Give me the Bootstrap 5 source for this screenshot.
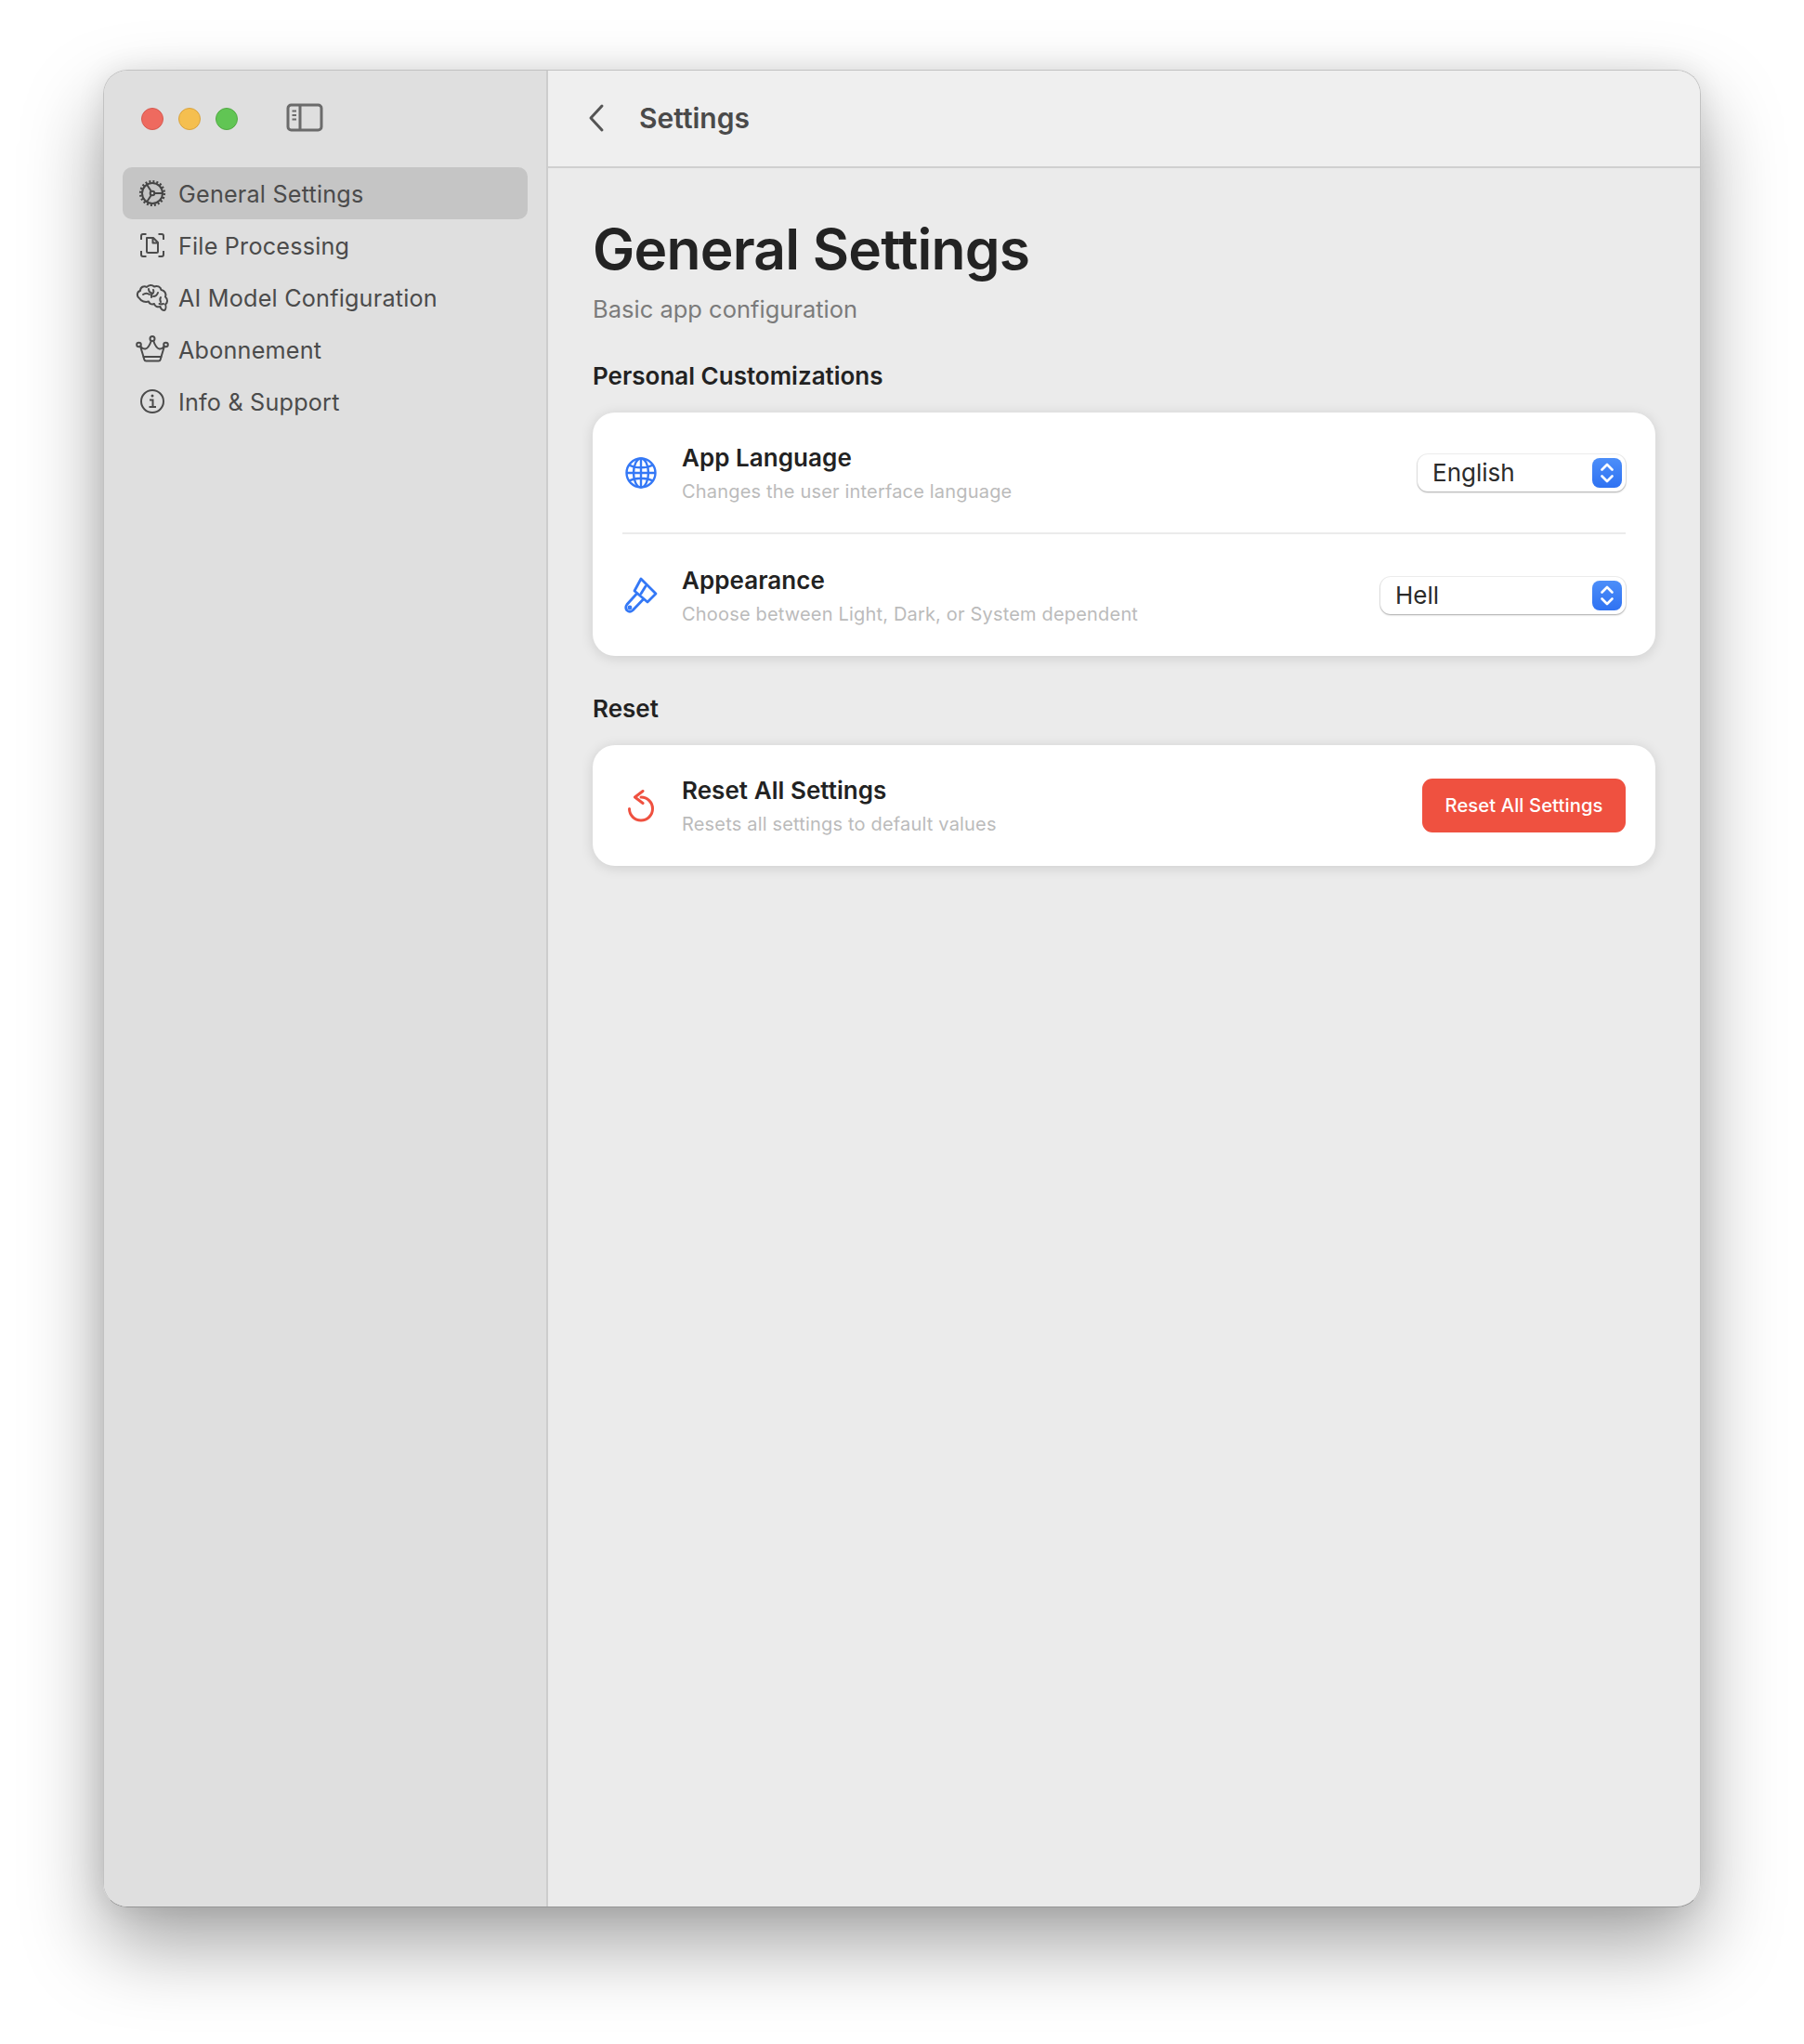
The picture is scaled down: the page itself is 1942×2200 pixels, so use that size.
<!DOCTYPE html>
<html lang="en">
<head>
<meta charset="utf-8">
<title>Settings</title>
<link href="https://cdn.jsdelivr.net/npm/bootstrap@5.3.0/dist/css/bootstrap.min.css" rel="stylesheet">
<style>
html,body{background:#fff;margin:0;}
body{font-family:Inter,"Liberation Sans",sans-serif;color:#222;padding:75px 111px 147px 111px;}
.app-win{height:1978px;background:#ebebeb;border:1px solid #c2c2c2;border-bottom-color:#969696;border-radius:26px;overflow:hidden;}
.win-shadow{border-radius:26px;box-shadow:0 0 30px rgba(0,0,0,.09),0 40px 85px rgba(0,0,0,.36);}
.side-pane{width:478px;flex:none;background:#dfdfdf;border-right:2px solid #cdcdcd;padding:0 20px;}
.title-row{height:104px;padding-left:20px;gap:16px;}
.tl-dot{width:24px;height:24px;border-radius:50%;border:1px solid;}
.tl-r{background:#ee6a5f;border-color:#d65a50;}
.tl-y{background:#f5bf4f;border-color:#d9a33f;}
.tl-g{background:#61c554;border-color:#52a944;}
.toggle-ico{margin-left:36px;margin-top:-3px;}
.side-link{height:56px;border-radius:10px;padding:0 0 0 14px;gap:10px;color:#4b4b4b;font-size:25.2px;letter-spacing:.2px;text-decoration:none;}
.side-link span{padding-top:3px;}
.side-link:hover{color:#4b4b4b;}
.side-link.is-on{background:#c5c5c5;}
.side-link svg{width:36px;height:36px;flex:none;}
.top-bar{height:105px;background:#efefef;border-bottom:2px solid #cfcfcf;padding:0 0 1px 43px;gap:35px;}
.top-title{font-size:30px;font-weight:600;color:#4a4a4a;margin:0;}
.pane-body{padding:48px 48px 0 48px;}
.big-title{font-size:60.500px;font-weight:600;line-height:78px;letter-spacing:-.8px;margin:0;color:#232323;}
.sub-title{font-size:25.500px;line-height:36px;color:#7b7b7b;margin:8px 0 0;}
.group-head{font-size:26px;font-weight:600;line-height:36px;color:#222;margin:0;}
.group-head.first{margin-top:36px;}
.group-head.second{margin-top:39px;}
.set-card{border:0;border-radius:24px;background:#fff;box-shadow:0 2px 14px rgba(0,0,0,.13);margin-top:21px;padding:0 32px;}
.set-row{border:0;background:transparent;padding:0;gap:24px;}
.set-row.r-a{height:131px;border-bottom:2px solid #ebebeb;}
.set-row.r-b{height:131px;}
.set-row.r-c{height:130px;}
.row-ico{width:40px;flex:none;}
.row-ico svg{display:block;margin:auto;}
.row-t{font-size:26px;font-weight:600;line-height:36px;color:#222;padding-top:1px;letter-spacing:.05px;}
.row-d{font-size:20px;line-height:30px;color:#bbb;letter-spacing:.18px;margin-top:3px;}
.pick{height:40px;background:#fff;border-radius:11px;box-shadow:0 0 0 1px rgba(0,0,0,.06),0 1px 2px rgba(0,0,0,.3);padding:0 4px 0 16px;font-size:26px;color:#2b2b2b;}
.pick-en{width:224px;}
.pick-de{width:264px;}
.pick-box{width:32px;height:32px;border-radius:8px;background:linear-gradient(#4c8ef9,#2f72f2);}
.btn.reset-btn{width:219px;height:58px;padding:0;background:#ef5140;border:0;border-radius:11px;color:#fff;font-size:20.200px;font-weight:500;letter-spacing:.1px;}
</style>
</head>
<body>
<div class="win-shadow">
<div class="app-win d-flex">
  <aside class="side-pane">
    <div class="title-row d-flex align-items-center">
      <span class="tl-dot tl-r"></span><span class="tl-dot tl-y"></span><span class="tl-dot tl-g"></span>
      <svg class="toggle-ico" width="40" height="31" viewBox="0 0 40 31" fill="none" stroke="#6b6b6b" stroke-width="3"><rect x="2" y="2" width="36" height="27" rx="3.5"/><path d="M15 2v27"/><path d="M6.5 8.5h4.500M6.500 13h4.500M6.500 17.500h4.500" stroke-width="2"/></svg>
    </div>
    <nav class="nav flex-column">
      <a class="side-link is-on d-flex align-items-center" href="#">
        <svg viewBox="0 0 36 36" fill="none" stroke="#454545" stroke-width="2"><circle cx="18" cy="18" r="11"/><circle cx="18" cy="18" r="12.800" stroke-width="2.600" stroke-dasharray="2 2.021"/><circle cx="18" cy="18" r="2.300"/><path d="M12 8.500l4.800 7.500M20.500 18H29.500M16.800 20L12 27.500"/></svg>
        <span>General Settings</span></a>
      <a class="side-link d-flex align-items-center" href="#">
        <svg viewBox="0 0 36 36" fill="none" stroke="#4b4b4b" stroke-width="2"><path d="M6 12V8a2 2 0 0 1 2-2h3.500M24.500 6H28a2 2 0 0 1 2 2v4M30 24v4a2 2 0 0 1-2 2h-3.500M11.500 30H8a2 2 0 0 1-2-2v-4"/><path d="M12 10h7l5 5v9.500a1.500 1.500 0 0 1-1.500 1.500h-9A1.500 1.500 0 0 1 12 24.500zM18.500 10v5.500H24" stroke-linejoin="round"/></svg>
        <span>File Processing</span></a>
      <a class="side-link d-flex align-items-center" href="#">
        <svg viewBox="0 0 36 36" fill="none" stroke="#4b4b4b" stroke-width="2" stroke-linecap="round" stroke-linejoin="round"><path d="M4 19C1 17 1 12 5 11 5 7 9 5 12 7 14 4.500 18 4.500 20 6.500 23 5 27 6.500 27.500 10 31 10.500 33.500 14 32 17.500 35 20 34.500 24 32 25.500 33 28 32.500 31 31 32 28.500 32 27 30 26.500 28 23.500 29 20.500 27.500 20 25 17.500 26 14.500 25 14 22.500 10.500 23.500 6 22.500 4 19z"/><path d="M8 15c2-1.500 5-1.500 7 0M14 9c0 2.500 1.500 4 3.500 4.500M19 10c1 2 0 4-2 5v3M24 13c-1 3-3 4-5 4M27 23c-1-2-1-3.500 0-5M30 25c-1.500.5-3 .5-4.500 0"/></svg>
        <span>AI Model Configuration</span></a>
      <a class="side-link d-flex align-items-center" href="#">
        <svg viewBox="0 0 36 36" fill="none" stroke="#4b4b4b" stroke-width="2" stroke-linejoin="round"><circle cx="18" cy="6.500" r="2.500"/><circle cx="3.500" cy="13" r="2.300"/><circle cx="32.500" cy="13" r="2.300"/><path d="M16.800 9C15 14 13 17 10.500 17.500 8 18 6.500 16 5 14.500L8.500 26h19l3.500-11.500c-1.500 1.500-3 3.500-5.500 3-2.500-.5-4.500-3.500-6.300-8.500"/><path d="M8.500 26h19l-.8 3a2 2 0 0 1-2 1.500H11.300a2 2 0 0 1-2-1.500z"/></svg>
        <span>Abonnement</span></a>
      <a class="side-link d-flex align-items-center" href="#">
        <svg viewBox="0 0 36 36" fill="none" stroke="#4b4b4b" stroke-width="2"><circle cx="18" cy="18" r="12"/><path d="M15 16.500h3.500V24M14.500 24h7.500"/><circle cx="18" cy="12" r="1.500" fill="#4b4b4b" stroke="none"/></svg>
        <span>Info &amp; Support</span></a>
    </nav>
  </aside>
  <main class="flex-grow-1">
    <header class="top-bar d-flex align-items-center">
      <svg width="20" height="32" viewBox="0 0 20 32" fill="none" stroke="#555" stroke-width="3" stroke-linecap="round" stroke-linejoin="round"><path d="M15 3L3 16l12 13"/></svg>
      <h1 class="top-title">Settings</h1>
    </header>
    <div class="pane-body">
      <h2 class="big-title">General Settings</h2>
      <p class="sub-title">Basic app configuration</p>

      <h3 class="group-head first">Personal Customizations</h3>
      <div class="card set-card">
        <div class="list-group list-group-flush">
          <div class="list-group-item set-row r-a d-flex align-items-center">
            <div class="row-ico"><svg width="34" height="34" viewBox="0 0 34 34" fill="none" stroke="#3478f6" stroke-width="2.400"><circle cx="17" cy="17" r="15.500"/><ellipse cx="17" cy="17" rx="8" ry="15.500"/><path d="M17 1.500v31M1.500 17h31M4 8.500c4 2 8 2.800 13 2.800s9-.8 13-2.800M4 25.500c4-2 8-2.800 13-2.800s9 .8 13 2.800"/></svg></div>
            <div class="flex-grow-1"><div class="row-t">App Language</div><div class="row-d">Changes the user interface language</div></div>
            <div class="pick pick-en d-flex align-items-center justify-content-between"><span>English</span>
              <span class="pick-box d-flex"><svg width="32" height="32" viewBox="0 0 32 32" fill="none" stroke="#fff" stroke-width="2.600" stroke-linecap="round" stroke-linejoin="round"><path d="M10.500 12.500l5.500-5.500 5.500 5.500M10.500 19.500l5.500 5.500 5.500-5.500"/></svg></span></div>
          </div>
          <div class="list-group-item set-row r-b d-flex align-items-center">
            <div class="row-ico"><svg width="36" height="40" viewBox="0 0 36 40" fill="none" stroke="#3478f6" stroke-width="2.800" stroke-linejoin="round" stroke-linecap="round"><path d="M18 2L34 18 25 27 11 15z"/><path d="M23 10l-5 8"/><path d="M13 18.500L3 29.500Q.5 33 3 36 6 38.500 9 36L20.500 24"/><circle cx="6" cy="33" r="1" fill="#3478f6"/></svg></div>
            <div class="flex-grow-1"><div class="row-t">Appearance</div><div class="row-d">Choose between Light, Dark, or System dependent</div></div>
            <div class="pick pick-de d-flex align-items-center justify-content-between"><span>Hell</span>
              <span class="pick-box d-flex"><svg width="32" height="32" viewBox="0 0 32 32" fill="none" stroke="#fff" stroke-width="2.600" stroke-linecap="round" stroke-linejoin="round"><path d="M10.500 12.500l5.500-5.500 5.500 5.500M10.500 19.500l5.500 5.500 5.500-5.500"/></svg></span></div>
          </div>
        </div>
      </div>

      <h3 class="group-head second">Reset</h3>
      <div class="card set-card">
        <div class="list-group list-group-flush">
          <div class="list-group-item set-row r-c d-flex align-items-center">
            <div class="row-ico"><svg width="30" height="35" viewBox="0 0 30 35" fill="none" stroke="#ef5140" stroke-width="3" stroke-linecap="round" stroke-linejoin="round"><path d="M15 8a12.500 12.500 0 1 1-12.500 12.500"/><path d="M17 1.500L8.500 8l8.500 6.500"/></svg></div>
            <div class="flex-grow-1"><div class="row-t">Reset All Settings</div><div class="row-d">Resets all settings to default values</div></div>
            <button type="button" class="btn reset-btn">Reset All Settings</button>
          </div>
        </div>
      </div>
    </div>
  </main>
</div>
</div>
<script src="https://cdn.jsdelivr.net/npm/bootstrap@5.3.0/dist/js/bootstrap.bundle.min.js"></script>
</body>
</html>
